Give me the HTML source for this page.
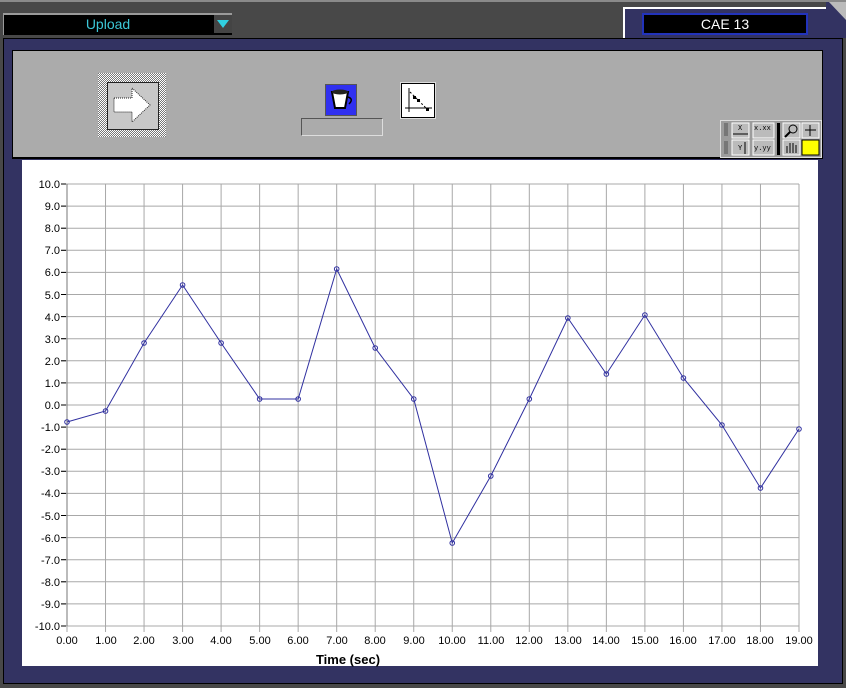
<!DOCTYPE html>
<html><head><meta charset="utf-8"><style>
body{margin:0;width:846px;height:688px;background:#484848;overflow:hidden;position:relative;font-family:"Liberation Sans",sans-serif}
.a{position:absolute}
</style></head><body>
<div class="a" style="left:0;top:0;width:846px;height:2px;background:#8a8a8a"></div>
<div class="a" style="left:3px;top:13px;width:228px;height:20px;background:#000;border-top:2px solid #9a9a9a;border-left:1px solid #9a9a9a;"></div>
<div class="a" style="left:3px;top:16px;width:210px;text-align:center;color:#3cc8d8;font-size:14px">Upload</div>
<div class="a" style="left:214px;top:15px;width:18px;height:18px;background:#444"></div>
<div class="a" style="left:217px;top:20px;width:0;height:0;border-left:6px solid transparent;border-right:6px solid transparent;border-top:8px solid #30d0e0"></div>
<div class="a" style="left:623px;top:7px;width:207px;height:31px;background:#333362;border-top:2px solid #fff;border-left:2px solid #fff"></div>
<div class="a" style="left:642px;top:13px;width:162px;height:18px;background:#000;border:2px solid #2233bb;color:#fff;font-size:14px;text-align:center;line-height:18px">CAE 13</div>
<div class="a" style="left:826px;top:2px;width:20px;height:36px;background:#333362"></div>
<svg class="a" style="left:826px;top:2px" width="20" height="20"><polygon points="3,0 20,0 20,18" fill="#bbb"/></svg>
<div class="a" style="left:3px;top:38px;width:838px;height:644px;background:#333362;border:1px solid #000"></div>
<div class="a" style="left:12px;top:50px;width:809px;height:106px;background:#ababab;border:1px solid #000;border-bottom:2px solid #000"></div>
<div class="a" style="left:98px;top:73px;width:68px;height:64px;background:repeating-conic-gradient(#fff 0 25%,#777 0 50%) 0 0/2px 2px"></div>
<div class="a" style="left:107px;top:82px;width:50px;height:46px;background:#c8c8c8;border:1px solid #222"></div>
<svg class="a" style="left:112px;top:86px" width="44" height="40"><polygon points="2,12 20,12 20,2 38,19 20,36 20,26 2,26" fill="#fff" stroke="#222" stroke-dasharray="1 1"/></svg>
<div class="a" style="left:325px;top:84px;width:30px;height:30px;background:#3030f0;border:1px solid #555"></div>
<svg class="a" style="left:328px;top:87px" width="28" height="26"><path d="M4 5 L20 5 L17 21 L7 21 Z" fill="#fff" stroke="#000" stroke-width="2"/><ellipse cx="12" cy="5" rx="8" ry="2.5" fill="#222"/><path d="M20 10 Q26 12 21 17" stroke="#000" fill="none" stroke-width="1.5"/></svg>
<div class="a" style="left:301px;top:118px;width:80px;height:16px;border:1px solid #555;border-right-color:#ddd;border-bottom-color:#ddd"></div>
<div class="a" style="left:401px;top:83px;width:32px;height:33px;background:#fff;border:1px solid #000;outline:1px solid #ddd"></div>
<svg class="a" style="left:402px;top:84px" width="32" height="33"><path d="M7 4 V28 M3 24 H30" stroke="#000"/><path d="M8 8 L26 26" stroke="#000" stroke-dasharray="2 2"/><rect x="11" y="12" width="3" height="3"/><rect x="15" y="15" width="3" height="3"/><rect x="24" y="24" width="3" height="3"/></svg>
<div class="a" style="left:720px;top:120px;width:100px;height:36px;background:#9c9c9c;border:1px solid #ddd"></div>
<svg class="a" style="left:720px;top:120px" width="102" height="38" font-size="7" font-family="Liberation Mono,monospace">
<rect x="4" y="3" width="4" height="13" fill="#777"/><rect x="4" y="21" width="4" height="13" fill="#777"/>
<rect x="12" y="3" width="17" height="15" fill="#bbb" stroke="#fff"/><rect x="12" y="20" width="17" height="15" fill="#bbb" stroke="#fff"/>
<rect x="33" y="3" width="21" height="15" fill="#bbb" stroke="#fff"/><rect x="33" y="20" width="21" height="15" fill="#bbb" stroke="#fff"/>
<text x="18" y="10">X</text><path d="M13 14 H28" stroke="#000"/><text x="18" y="30">Y</text><path d="M25 22 V34" stroke="#000"/>
<text x="34" y="10">x.xx</text><text x="34" y="30">y.yy</text>
<rect x="57" y="3" width="3" height="32" fill="#000"/>
<rect x="63" y="3" width="17" height="15" fill="#bbb" stroke="#fff"/><rect x="63" y="20" width="17" height="15" fill="#bbb" stroke="#fff"/>
<circle cx="73" cy="9" r="4" fill="none" stroke="#000"/><path d="M70 12 L65 17" stroke="#000" stroke-width="2"/>
<path d="M67 33 V26 M70 33 V23 M73 33 V23 M76 33 V25" stroke="#000"/>
<rect x="82" y="3" width="17" height="15" fill="#bbb" stroke="#fff"/><path d="M90 5 V16 M85 10 H96" stroke="#000"/>
<rect x="82" y="20" width="17" height="15" fill="#ff0" stroke="#000"/>
</svg>
<div class="a" style="left:22px;top:160px;width:796px;height:506px;background:#fff"></div>
<svg class="a" style="left:0;top:0" width="846" height="688" font-size="11" font-family="Liberation Sans,sans-serif">
<g id="g" stroke="#a8a8a8" stroke-width="1"></g>
<g text-anchor="end">
<text x="60" y="188">10.0</text><text x="60" y="210">9.0</text><text x="60" y="232">8.0</text><text x="60" y="254">7.0</text><text x="60" y="276">6.0</text><text x="60" y="299">5.0</text><text x="60" y="321">4.0</text><text x="60" y="343">3.0</text><text x="60" y="365">2.0</text><text x="60" y="387">1.0</text><text x="60" y="409">0.0</text><text x="60" y="431">-1.0</text><text x="60" y="453">-2.0</text><text x="60" y="475">-3.0</text><text x="60" y="497">-4.0</text><text x="60" y="520">-5.0</text><text x="60" y="542">-6.0</text><text x="60" y="564">-7.0</text><text x="60" y="586">-8.0</text><text x="60" y="608">-9.0</text><text x="60" y="630">-10.0</text>
</g>
<g text-anchor="middle">
<text x="67" y="644">0.00</text><text x="106" y="644">1.00</text><text x="144" y="644">2.00</text><text x="183" y="644">3.00</text><text x="221" y="644">4.00</text><text x="260" y="644">5.00</text><text x="298" y="644">6.00</text><text x="337" y="644">7.00</text><text x="375" y="644">8.00</text><text x="414" y="644">9.00</text><text x="452" y="644">10.00</text><text x="491" y="644">11.00</text><text x="529" y="644">12.00</text><text x="568" y="644">13.00</text><text x="606" y="644">14.00</text><text x="645" y="644">15.00</text><text x="683" y="644">16.00</text><text x="722" y="644">17.00</text><text x="760" y="644">18.00</text><text x="799" y="644">19.00</text>
<text x="348" y="664" font-weight="bold" font-size="13">Time (sec)</text>
</g>
<g id="d" fill="none" stroke="#3030a0"></g>
</svg>
<script>
var g=document.getElementById('g'),s='';
for(var i=0;i<=19;i++){var x=67+i*38.526;s+='<line x1="'+x+'" y1="184" x2="'+x+'" y2="632"/>';}
for(var j=0;j<=20;j++){var y=184+j*22.1;s+='<line x1="61" y1="'+y+'" x2="799" y2="'+y+'"/>';}
s+='<line x1="67" y1="184" x2="67" y2="626" stroke="#777"/>';
for(var j=0;j<=20;j++){var y=184+j*22.1;s+='<line x1="61" y1="'+y+'" x2="66" y2="'+y+'" stroke="#000"/>';}
g.innerHTML=s;
var ys=[422,411,343,285,343,399,399,269,348,399,543,476,399,318,374,315,378,425,488,429],p='',c='';
for(var i=0;i<20;i++){var x=67+i*38.526;p+=x+','+ys[i]+' ';c+='<circle cx="'+x+'" cy="'+ys[i]+'" r="2.3"/>';}
document.getElementById('d').innerHTML='<polyline points="'+p+'"/>'+c;
</script>
</body></html>
